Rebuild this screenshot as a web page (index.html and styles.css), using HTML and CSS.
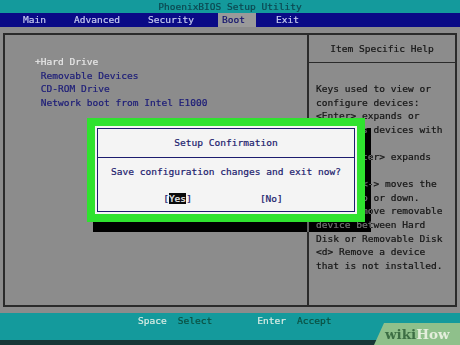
FILE: index.html
```html
<!DOCTYPE html>
<html lang="en">
<head>
    <meta charset="UTF-8">
    <meta name="viewport" content="width=device-width, initial-scale=1.0">
    <title>PhoenixBIOS Setup Utility</title>
    <link rel="stylesheet" href="styles.css">
</head>
<body>
    <div class="screen">
        <div class="titlebar">PhoenixBIOS Setup Utility</div>

        <nav class="menubar">
            <span class="menu-item">Main</span>
            <span class="menu-item">Advanced</span>
            <span class="menu-item">Security</span>
            <span class="menu-item active">Boot</span>
            <span class="menu-item exit">Exit</span>
        </nav>

        <div class="panels">
            <div class="boot-list">
                <div class="boot-item current">+Hard Drive</div>
                <div class="boot-item"> Removable Devices</div>
                <div class="boot-item"> CD-ROM Drive</div>
                <div class="boot-item"> Network boot from Intel E1000</div>
            </div>

            <div class="help">
                <div class="help-title">Item Specific Help</div>
                <div class="help-text">
                    <div>Keys used to view or</div>
                    <div>configure devices:</div>
                    <div>&lt;Enter&gt; expands or</div>
                    <div>collapses devices with</div>
                    <div></div>
                    <div>&lt;Ctrl+Enter&gt; expands</div>
                    <div></div>
                    <div>&lt;+&gt; and &lt;-&gt; moves the</div>
                    <div>device up or down.</div>
                    <div>&lt;n&gt; May move removable</div>
                    <div>device between Hard</div>
                    <div>Disk or Removable Disk</div>
                    <div>&lt;d&gt; Remove a device</div>
                    <div>that is not installed.</div>
                </div>
            </div>
        </div>

        <div class="statusbar">
            <span class="key">Space</span>
            <span class="desc">Select</span>
            <span class="key second">Enter</span>
            <span class="desc">Accept</span>
            <div class="wikihow"><span class="wiki">wiki</span><span class="how">How</span></div>
        </div>

        <!-- confirmation popup sits over the boot screen -->
        <div class="dialog-shadow"></div>
        <div class="dialog">
            <div class="dialog-frame">
                <div class="dialog-title">Setup Confirmation</div>
                <div class="dialog-body">
                    <div class="dialog-message">Save configuration changes and exit now?</div>
                    <div class="dialog-buttons">
                        <span>[<span class="selected">Yes</span>]</span>
                        <span>[No]</span>
                    </div>
                </div>
            </div>
        </div>
    </div>
</body>
</html>
```

FILE: styles.css
```css
body {
    margin: 0;
    background: #8c8c8c;
    font-family: "DejaVu Sans Mono", "Liberation Mono", monospace;
    font-size: 9.55px;
    -webkit-text-stroke: 0.2px;
}

.screen {
    position: relative;
    width: 460px;
    height: 345px;
    overflow: hidden;
    background: #8c8c8c;
}

.titlebar {
    height: 13px;
    line-height: 14px;
    background: #149a9c;
    color: #0c4750;
    text-align: center;
}

.menubar {
    display: flex;
    height: 14px;
    line-height: 14px;
    padding-left: 9px;
    background: #0a0a86;
    color: #c6cbf0;
}

.menu-item {
    padding: 0 14px;
}

.menu-item.active {
    margin-left: 10px;
    padding: 0 11px 0 4px;
    background: #9a9a9a;
    color: #14146e;
}

.menu-item.exit {
    padding-left: 20px;
}

.panels {
    display: grid;
    grid-template-columns: 302px 1fr;
    box-sizing: border-box;
    height: 274px;
    margin: 6px 3px 0;
    border: 2px solid #2b2b2b;
}

.boot-list {
    padding: 20px 0 0 30px;
}

.boot-item {
    height: 13.6px;
    line-height: 13.6px;
    white-space: pre;
    color: #1c1c78;
}

.boot-item.current {
    color: #e6e6e6;
}

.help {
    border-left: 2px solid #2b2b2b;
}

.help-title {
    height: 27px;
    line-height: 27px;
    text-align: center;
    color: #151515;
    border-bottom: 1px solid #2b2b2b;
}

.help-text {
    padding: 19px 0 0 7px;
    color: #151515;
}

.help-text div {
    height: 13.6px;
    line-height: 13.6px;
    white-space: pre;
}

.statusbar {
    position: relative;
    display: flex;
    height: 27px;
    margin-top: 6px;
    padding-left: 138px;
    line-height: 16px;
    background: #149a9c;
    border-bottom: 5px solid #173636;
}

.key {
    color: #d6ece4;
    margin-right: 11px;
}

.key.second {
    margin-left: 45px;
}

.desc {
    color: #0b4f40;
}

.wikihow {
    position: absolute;
    right: 0;
    bottom: -5px;
    width: 86px;
    height: 22px;
    padding-left: 11px;
    box-sizing: border-box;
    background: #8fc08b;
    clip-path: polygon(10px 0, 100% 0, 100% 100%, 0 100%);
    font-family: "DejaVu Serif", serif;
    font-weight: bold;
    font-size: 13.5px;
    line-height: 22px;
    -webkit-text-stroke: 0;
}

.wiki {
    color: #3d6e44;
}

.how {
    color: #e4eedc;
}

/* text-mode shadow: blacks out the grey, leaves dark text showing grey */
.dialog-shadow {
    position: absolute;
    left: 93px;
    top: 128px;
    width: 278px;
    height: 104px;
    background: #8c8c8c;
    mix-blend-mode: difference;
}

.dialog {
    position: absolute;
    left: 87px;
    top: 118px;
    width: 278px;
    height: 104px;
    box-sizing: border-box;
    padding: 2px;
    background: #f4f4f4;
    border: 8px solid #2fe22f;
    color: #1c1c6e;
}

.dialog-frame {
    height: 100%;
    box-sizing: border-box;
    border: 1px solid #1c1c6e;
}

.dialog-title {
    height: 28px;
    line-height: 28px;
    text-align: center;
    border-bottom: 1px solid #1c1c6e;
}

.dialog-body {
    padding-top: 8px;
    text-align: center;
}

.dialog-message {
    line-height: 12px;
}

.dialog-buttons {
    display: flex;
    justify-content: center;
    gap: 68px;
    margin-top: 15px;
    margin-left: -6px;
    line-height: 12px;
}

.selected {
    background: #0a0a0a;
    color: #f4f4f4;
}
```
